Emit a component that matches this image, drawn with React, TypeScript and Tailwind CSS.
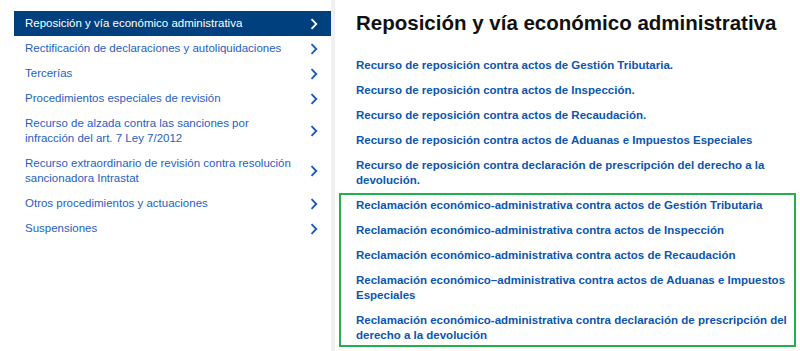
import React from "react";

const menu = [
  "Reposición y vía económico administrativa",
  "Rectificación de declaraciones y autoliquidaciones",
  "Tercerías",
  "Procedimientos especiales de revisión",
  "Recurso de alzada contra las sanciones por infracción del art. 7 Ley 7/2012",
  "Recurso extraordinario de revisión contra resolución sancionadora Intrastat",
  "Otros procedimientos y actuaciones",
  "Suspensiones",
];

const recursos = [
  "Recurso de reposición contra actos de Gestión Tributaria.",
  "Recurso de reposición contra actos de Inspección.",
  "Recurso de reposición contra actos de Recaudación.",
  "Recurso de reposición contra actos de Aduanas e Impuestos Especiales",
  "Recurso de reposición contra declaración de prescripción del derecho a la devolución.",
];

const reclamaciones = [
  "Reclamación económico-administrativa contra actos de Gestión Tributaria",
  "Reclamación económico-administrativa contra actos de Inspección",
  "Reclamación económico-administrativa contra actos de Recaudación",
  "Reclamación económico–administrativa contra actos de Aduanas e Impuestos Especiales",
  "Reclamación económico-administrativa contra declaración de prescripción del derecho a la devolución",
];

function Chevron({ active }: { active: boolean }) {
  return (
    <svg width="8" height="12" viewBox="0 0 8 12" className="shrink-0">
      <path
        d="M1.5 1.2 L6.3 6 L1.5 10.8"
        fill="none"
        stroke={active ? "#ffffff" : "#1457c0"}
        strokeWidth="1.8"
      />
    </svg>
  );
}

export default function App() {
  return (
    <div
      className="w-[800px] h-[351px] bg-white flex overflow-hidden"
      style={{ fontFamily: '"Liberation Sans", Arial, sans-serif' }}
    >
      {/* sidebar */}
      <div className="pl-[14px] pt-[11px] w-[331px] shrink-0">
        <ul>
          {menu.map((item, i) => (
            <li
              key={item}
              className={
                "flex items-center pl-[11px] pr-[13px] py-[5px] text-[11.5px] leading-[15px] " +
                (i === 0 ? "bg-[#00407e] text-white" : "text-[#1f60c4]")
              }
            >
              <span className="flex-1 mr-[16px]">{item}</span>
              <Chevron active={i === 0} />
            </li>
          ))}
        </ul>
      </div>

      <div className="w-[4px] shrink-0 bg-[#f0f0f0]" />

      {/* content */}
      <div className="flex-1 pl-[4px] pr-[4.5px]">
        <h1 className="pl-[17px] pt-[11px] text-[20.5px] leading-[24px] font-bold text-[#111111]">
          Reposición y vía económico administrativa
        </h1>

        <ul className="mt-[22.6px] pl-[17px] flex flex-col gap-[10px]">
          {recursos.map((r) => (
            <li key={r} className="text-[11.5px] leading-[15px] font-bold text-[#0b56b0]">
              {r}
            </li>
          ))}
        </ul>

        <ul className="mt-[5px] border-2 border-[#22b14c] pl-[15px] pr-[2px] pt-[3px] pb-[2px] flex flex-col gap-[10px]">
          {reclamaciones.map((r) => (
            <li key={r} className="text-[11.5px] leading-[15px] font-bold text-[#0b56b0]">
              {r}
            </li>
          ))}
        </ul>
      </div>
    </div>
  );
}
